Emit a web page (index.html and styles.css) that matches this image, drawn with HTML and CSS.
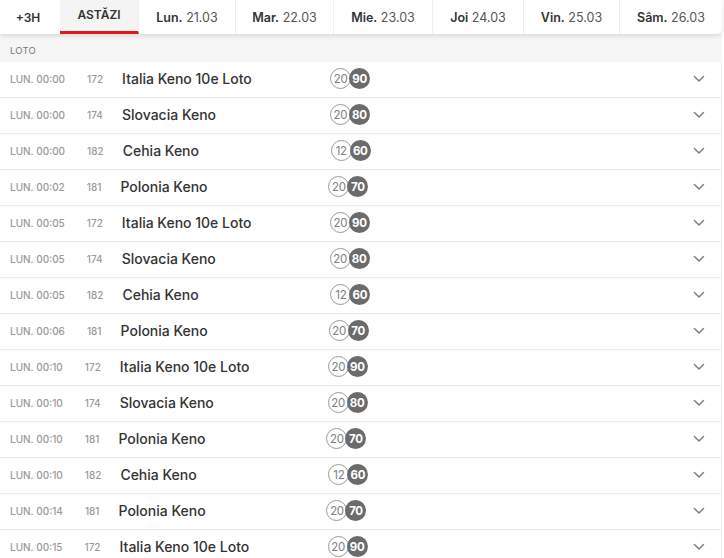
FILE: index.html
```html
<!DOCTYPE html>
<html lang="ro">

<head>
    <meta charset="UTF-8" />
    <meta name="viewport" content="width=device-width, initial-scale=1.0" />
    <title>Loto</title>
    <link rel="stylesheet" href="styles.css">
</head>

<body>
    <div class="page">
        <nav class="days">
            <div class="day day-short"><b>+3H</b></div>
            <div class="day day-active"><b>ASTĂZI</b></div>
            <div class="day" style="width: 97px"><b>Lun.</b> 21.03</div>
            <div class="day" style="width: 98px"><b>Mar.</b> 22.03</div>
            <div class="day" style="width: 99px"><b>Mie.</b> 23.03</div>
            <div class="day" style="width: 91px"><b>Joi</b> 24.03</div>
            <div class="day" style="width: 96px"><b>Vin.</b> 25.03</div>
            <div class="day day-last" style="width: 102px"><b>Sâm.</b> 26.03</div>
        </nav>

        <div class="section">Loto</div>

        <ul class="draws" id="draws"></ul>
    </div>

    <script>
        const draws = [
            ["00:00", "172", "Italia Keno 10e Loto", "20", "90"],
            ["00:00", "174", "Slovacia Keno", "20", "80"],
            ["00:00", "182", "Cehia Keno", "12", "60"],
            ["00:02", "181", "Polonia Keno", "20", "70"],
            ["00:05", "172", "Italia Keno 10e Loto", "20", "90"],
            ["00:05", "174", "Slovacia Keno", "20", "80"],
            ["00:05", "182", "Cehia Keno", "12", "60"],
            ["00:06", "181", "Polonia Keno", "20", "70"],
            ["00:10", "172", "Italia Keno 10e Loto", "20", "90"],
            ["00:10", "174", "Slovacia Keno", "20", "80"],
            ["00:10", "181", "Polonia Keno", "20", "70"],
            ["00:10", "182", "Cehia Keno", "12", "60"],
            ["00:14", "181", "Polonia Keno", "20", "70"],
            ["00:15", "172", "Italia Keno 10e Loto", "20", "90"]
        ];

        const list = document.getElementById("draws");
        const chevron = '<svg width="12" height="8" viewBox="0 0 12 8"><path d="M1.5 1.5 L6 6 L10.5 1.5" fill="none" stroke="#808080" stroke-width="1.5" stroke-linecap="round" stroke-linejoin="round"/></svg>';

        draws.forEach(([time, code, name, picked, total]) => {
            const li = document.createElement("li");
            li.className = "draw";
            li.innerHTML = `
                <span class="draw-time">Lun. ${time}</span>
                <span class="draw-code">${code}</span>
                <span class="draw-name">${name}</span>
                <span class="balls">
                    <span class="ball ball-picked">${picked}</span>
                    <span class="ball ball-total">${total}</span>
                </span>
                <span class="draw-toggle">${chevron}</span>`;
            list.appendChild(li);
        });
    </script>
</body>

</html>
```

FILE: styles.css
```css
* {
    margin: 0;
    padding: 0;
    box-sizing: border-box;
}

body {
    background: #ffffff;
    font-family: Inter, "Noto Sans", sans-serif;
    color: #333333;
}

.page {
    width: 722px;
}

.days {
    display: flex;
    height: 34px;
    background: #ffffff;
    border-bottom-right-radius: 6px;
    box-shadow: 0 2px 5px rgba(0, 0, 0, 0.12);
    position: relative;
    z-index: 1;
}

.day {
    display: flex;
    align-items: center;
    justify-content: center;
    height: 34px;
    font-size: 12.5px;
    color: #555555;
    border-right: 1px solid #eeeeee;
    white-space: pre;
}

.day b {
    font-weight: 600;
    color: #333333;
}

.day-short {
    width: 60px;
    font-size: 12px;
    border-right: none;
    padding-right: 4px;
}

.day-active {
    width: 79px;
    font-size: 12px;
    background: #f4f4f4;
    border-bottom: 3px solid #e3171c;
    align-items: flex-start;
    padding-top: 7px;
}

.day-last {
    border-right: none;
}

.section {
    height: 28px;
    background: #f6f6f6;
    padding: 11px 0 0 10px;
    font-size: 9.5px;
    color: #777777;
    text-transform: uppercase;
    letter-spacing: 0.2px;
}

.draws {
    list-style: none;
    border-right: 1px solid #eeeeee;
}

.draw {
    display: flex;
    align-items: center;
    height: 36px;
    padding-left: 10px;
    padding-bottom: 2px;
    border-bottom: 1px solid #ebebeb;
}

.draw-time {
    font-size: 10px;
    font-weight: 500;
    color: #9a9a9a;
    text-transform: uppercase;
    margin-right: 22px;
}

.draw-code {
    font-size: 10px;
    font-weight: 500;
    color: #9a9a9a;
    margin-right: 19px;
}

.draw-name {
    width: 208px;
    font-size: 14px;
    font-weight: 500;
    color: #333333;
}

.balls {
    display: flex;
    align-items: center;
}

.ball {
    display: flex;
    align-items: center;
    justify-content: center;
    width: 21px;
    height: 21px;
    border-radius: 50%;
    font-size: 11.5px;
    letter-spacing: -0.3px;
}

.ball-picked {
    border: 1px solid #999999;
    color: #808080;
    background: #ffffff;
}

.ball-total {
    margin-left: -2px;
    background: #6b6b6b;
    color: #ffffff;
    font-weight: 700;
}

.draw-toggle {
    display: flex;
    margin-left: auto;
    margin-right: 16px;
}
```
